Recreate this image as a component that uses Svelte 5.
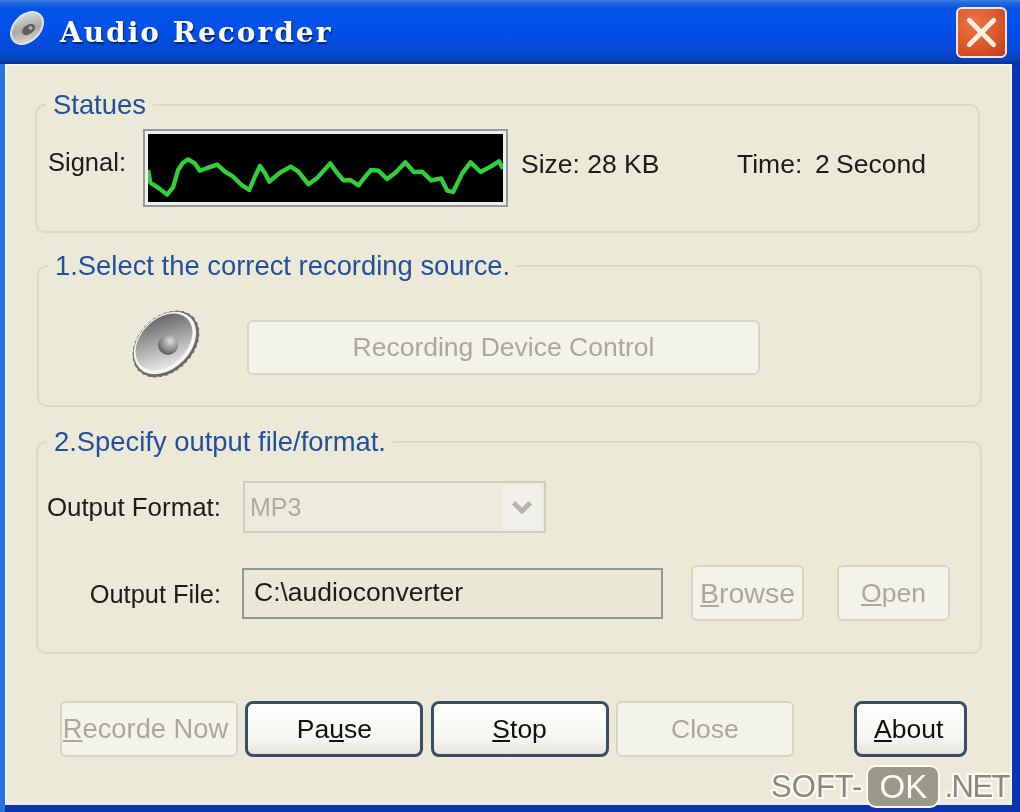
<script lang="ts">
  // Audio Recorder dialog, XP Luna look
  // points traced in 3x crop coordinates, the svg viewBox uses the same space
  const wave = [
    [445, 510], [452, 548], [478, 565], [502, 584], [520, 562], [535, 510], [548, 490], [565, 478],
    [585, 490], [600, 512], [625, 503], [652, 494], [675, 515], [700, 530], [725, 555], [748, 570],
    [765, 530], [780, 498], [795, 520], [808, 545], [840, 518], [872, 500], [895, 515], [925, 553],
    [950, 535], [990, 490], [1010, 518], [1030, 541], [1050, 540], [1075, 556], [1095, 530], [1112, 510],
    [1135, 512], [1160, 537], [1185, 518], [1215, 487], [1240, 516], [1265, 515], [1292, 541], [1322, 535],
    [1340, 572], [1358, 576], [1385, 520], [1410, 487], [1440, 516], [1470, 500], [1495, 484], [1507, 506],
  ];
  const wavePoints = wave.map((p) => p.join(',')).join(' ');
</script>

<div class="window">
  <header class="titlebar">
    <svg class="title-icon" viewBox="0 0 66 66" aria-hidden="true">
      <defs>
        <linearGradient id="tiny" x1="0.1" y1="0.9" x2="0.8" y2="0.1">
          <stop offset="0" stop-color="#e6d8d4" />
          <stop offset="0.5" stop-color="#a8a8a4" />
          <stop offset="1" stop-color="#d8dce0" />
        </linearGradient>
      </defs>
      <ellipse cx="33" cy="33" rx="36" ry="25" transform="rotate(-45 33 33)" fill="url(#tiny)" stroke="#dfe4ea" stroke-width="4" />
      <ellipse cx="36" cy="36" rx="14" ry="9" transform="rotate(-35 36 36)" fill="#5f5c60" />
      <circle cx="40" cy="33" r="4" fill="#b5a9ac" />
    </svg>
    <span class="title">Audio Recorder</span>
    <button type="button" class="close-x" aria-label="Close">
      <svg viewBox="0 0 50 50" aria-hidden="true">
        <path d="M12 12 L38 38 M38 12 L12 38" stroke="#fff0e2" stroke-width="5" stroke-linecap="round" />
      </svg>
    </button>
  </header>

  <main class="client">
    <fieldset class="group group-status">
      <legend>Statues</legend>
      <div class="status-row">
        <span class="signal-label">Signal:</span>
        <div class="monitor">
          <svg viewBox="445 402 1062 204" preserveAspectRatio="none" aria-hidden="true">
            <polyline points={wavePoints} fill="none" stroke="#2fd03a" stroke-width="13" stroke-linejoin="round" />
          </svg>
        </div>
        <span class="size">Size: 28 KB</span>
        <span class="time">Time:&nbsp; 2 Second</span>
      </div>
    </fieldset>

    <fieldset class="group group-source">
      <legend>1.Select the correct recording source.</legend>
      <div class="source-row">
        <svg class="speaker" viewBox="0 0 66 66" aria-hidden="true">
          <defs>
            <linearGradient id="cone" x1="0.1" y1="0.9" x2="0.75" y2="0.05">
              <stop offset="0" stop-color="#eeeeee" />
              <stop offset="0.5" stop-color="#ababab" />
              <stop offset="1" stop-color="#68686c" />
            </linearGradient>
            <radialGradient id="dome" cx="0.62" cy="0.3" r="0.75">
              <stop offset="0" stop-color="#dcdcdc" />
              <stop offset="1" stop-color="#56565a" />
            </radialGradient>
          </defs>
          <ellipse cx="33" cy="33" rx="38" ry="27" transform="rotate(-45 33 33)" fill="#6a6a6e" stroke="#6a6a6e" stroke-dasharray="3 3" />
          <ellipse cx="32" cy="32" rx="36" ry="25.5" transform="rotate(-45 32 32)" fill="#f4f4f0" />
          <ellipse cx="31" cy="31" rx="33" ry="23" transform="rotate(-45 31 31)" fill="url(#cone)" />
          <circle cx="35" cy="34" r="10" fill="url(#dome)" />
        </svg>
        <button type="button" class="btn device" disabled>Recording Device Control</button>
      </div>
    </fieldset>

    <fieldset class="group group-output">
      <legend>2.Specify output file/format.</legend>
      <div class="output-grid">
        <span class="field-label">Output Format:</span>
        <div class="combo">
          <span>MP3</span>
          <span class="combo-arrow">
            <svg viewBox="0 0 20 14" aria-hidden="true">
              <path d="M3 3 L10 10 L17 3" fill="none" stroke="#b7b5a8" stroke-width="4" />
            </svg>
          </span>
        </div>
        <span class="field-label file-label">Output File:</span>
        <div class="file-row">
          <div class="file-input">C:\audioconverter</div>
          <button type="button" class="btn browse" disabled><u>B</u>rowse</button>
          <button type="button" class="btn open" disabled><u>O</u>pen</button>
        </div>
      </div>
    </fieldset>

    <div class="actions">
      <button type="button" class="btn action record" disabled><u>R</u>ecorde Now</button>
      <button type="button" class="btn action active">Pa<u>u</u>se</button>
      <button type="button" class="btn action active"><u>S</u>top</button>
      <button type="button" class="btn action" disabled>Close</button>
      <button type="button" class="btn about active"><u>A</u>bout</button>
    </div>
  </main>

  <div class="watermark">
    <span>SOFT-</span><span class="ok">OK</span><span class="net">.NET</span>
  </div>
</div>

<style>
  :global(body) {
    margin: 0;
    background: #0a2fa8;
  }

  .window {
    position: relative;
    width: 1020px;
    height: 812px;
    overflow: hidden;
    display: flex;
    flex-direction: column;
    font-family: "Liberation Sans", Arial, sans-serif;
    font-size: 26.5px;
    color: #1c1c18;
    background: linear-gradient(90deg, #2a72dc 0, #2a72dc 5px, #0b35b0 5px, #0b35b0 100%);
    filter: blur(0.7px);
  }

  .titlebar {
    height: 64px;
    flex: none;
    display: flex;
    align-items: center;
    padding: 0 13px 0 10px;
    box-sizing: border-box;
    background: linear-gradient(180deg, #3a80dc 0, #1f68dc 3px, #0453e6 9px, #0250ea 30px, #0449d2 52px, #073fb4 61px, #08328f 64px);
  }

  .title-icon {
    width: 34px;
    height: 34px;
    flex: none;
    margin-top: -8px;
  }

  .title {
    margin-left: 16px;
    font-family: "DejaVu Serif", serif;
    font-weight: 700;
    font-size: 28px;
    letter-spacing: 2px;
    color: #fffdf0;
    text-shadow: 1px 2px 1px #04257c;
  }

  .close-x {
    margin-left: auto;
    width: 51px;
    height: 51px;
    padding: 0;
    border: 2px solid #f3e9e2;
    border-radius: 6px;
    background: radial-gradient(circle at 35% 30%, #e8764a 0, #dd5a2c 50%, #bf3a22 100%);
  }

  .close-x svg {
    display: block;
    width: 100%;
    height: 100%;
  }

  .client {
    flex: 1;
    margin: 0 8px 7px 5px;
    padding: 26px 30px 0 30px;
    background: #ece9d8;
    box-shadow: inset 0 2px 0 #f2f2f4, inset 2px 0 0 #f5f3ea, inset -2px 0 0 #f5f3ea, inset 0 -3px 0 #e8eef8;
  }

  .group {
    margin: 0;
    min-width: 0;
    border: 2px solid #dcd9c8;
    border-radius: 10px;
  }

  legend {
    margin-left: 9px;
    padding: 0 7px;
    line-height: 30px;
    font-size: 27.4px;
    color: #22509c;
  }

  .group-status {
    margin-right: 2px;
    padding: 9px 0 24px 0;
  }

  .status-row {
    display: flex;
    align-items: center;
    height: 78px;
    padding-left: 11px;
  }

  .signal-label {
    width: 96px;
    padding-bottom: 12px;
    font-size: 25.5px;
  }

  .monitor {
    width: 355px;
    height: 68px;
    border: 4px solid #eef0ec;
    outline: 2px solid #8f9a9c;
    outline-offset: -1px;
    background: #000;
    flex: none;
  }

  .monitor svg {
    display: block;
    width: 100%;
    height: 100%;
  }

  .size {
    margin-left: 14px;
    width: 216px;
    flex: none;
    padding-bottom: 7px;
  }

  .time {
    padding-bottom: 7px;
    word-spacing: -1px;
  }

  .group-source {
    margin-top: 18px;
    margin-left: 2px;
    padding: 0 0 25px 0;
  }

  .source-row {
    display: flex;
    align-items: center;
    height: 65px;
    margin-top: 29px;
    padding-left: 94px;
    padding-top: 5px;
  }

  .speaker {
    width: 66px;
    height: 66px;
    flex: none;
    margin-top: -7px;
    overflow: visible;
  }

  .btn {
    box-sizing: border-box;
    padding: 0;
    font: inherit;
    font-size: 26.5px;
    border-radius: 6px;
    border: 2px solid #d8d5c4;
    background: #f4f3ea;
    color: #aca899;
  }

  .btn:disabled {
    text-shadow: 0 0 1px #f4f3ea;
  }

  .device {
    width: 513px;
    height: 55px;
    margin-left: 48px;
  }

  .group-output {
    margin-top: 20px;
    margin-left: 1px;
    padding: 25px 0 31px 0;
  }

  .output-grid {
    display: grid;
    grid-template-columns: 183px 1fr;
    column-gap: 22px;
    row-gap: 32px;
    align-items: center;
  }

  .field-label {
    text-align: right;
    font-size: 25.9px;
  }

  .file-label {
    font-size: 25.4px;
    padding-top: 3px;
  }

  .combo {
    box-sizing: border-box;
    width: 303px;
    height: 52px;
    margin-top: -1px;
    display: flex;
    align-items: center;
    padding: 0 3px 0 5px;
    border: 2px solid #d0cebd;
    background: #ecebde;
    color: #aeac9e;
    font-size: 25px;
  }

  .combo-arrow {
    margin-left: auto;
    width: 38px;
    height: 44px;
    background: #f1f0ea;
    display: flex;
    align-items: center;
    justify-content: center;
  }

  .combo-arrow svg {
    width: 24px;
    height: 17px;
  }

  .file-row {
    display: flex;
    align-items: center;
  }

  .file-input {
    box-sizing: border-box;
    width: 421px;
    height: 51px;
    margin-left: -1px;
    display: flex;
    align-items: center;
    padding: 0 0 2px 10px;
    border: 2px solid #8f9a94;
    background: #eae7d6;
  }

  .browse,
  .open {
    width: 113px;
    height: 56px;
  }

  .browse {
    margin-left: 28px;
    font-size: 28.5px;
  }

  .open {
    margin-left: 33px;
  }

  .actions {
    display: flex;
    margin-top: 47px;
    padding-left: 25px;
    gap: 7.3px;
  }

  .action {
    width: 178px;
    height: 56px;
  }

  .record {
    font-size: 27.3px;
    padding-right: 7px;
  }

  .active {
    border: 3px solid #3a4f66;
    border-radius: 8px;
    background: linear-gradient(180deg, #ffffff 0, #f6f6f0 70%, #e4e4dc 100%);
    color: #111;
  }

  .about {
    width: 113px;
    height: 56px;
    margin-left: 53px;
    padding-right: 4px;
  }

  .watermark {
    position: absolute;
    right: 11px;
    bottom: 4px;
    display: flex;
    align-items: center;
    height: 43px;
    font-size: 31px;
    color: #8a897a;
    -webkit-text-stroke: 4px #fbfbf6;
    paint-order: stroke fill;
  }

  .net {
    letter-spacing: -1.5px;
  }

  .ok {
    width: 74px;
    height: 43px;
    margin: 0 4px;
    display: flex;
    align-items: center;
    justify-content: center;
    box-sizing: border-box;
    border: 2px solid #fbfbf6;
    border-radius: 10px;
    background: #9b9a8a;
    color: #fbfbf6;
    font-size: 33px;
    -webkit-text-stroke: 0;
  }
</style>
